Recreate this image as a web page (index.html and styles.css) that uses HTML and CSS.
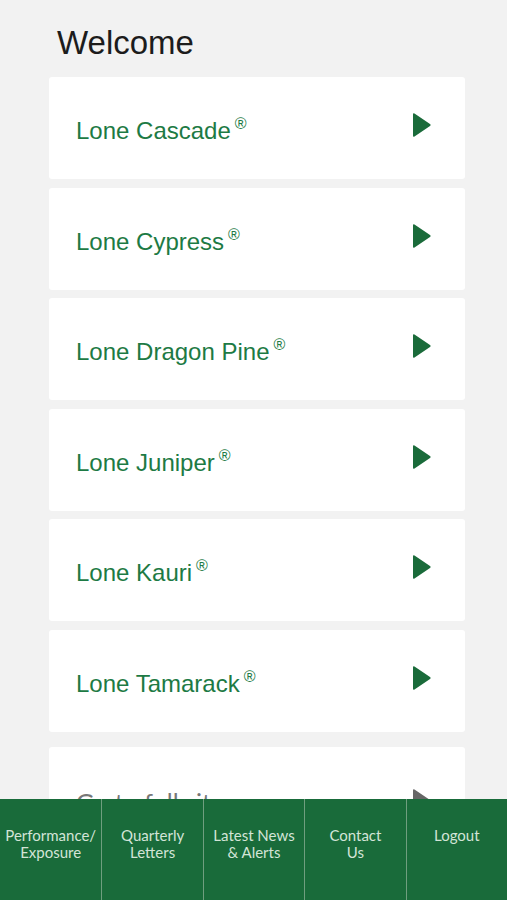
FILE: index.html
```html
<!DOCTYPE html>
<html lang="en">
<head>
  <meta charset="UTF-8" />
  <meta name="viewport" content="width=device-width, initial-scale=1.0" />
  <title>Welcome</title>
  <link rel="stylesheet" href="styles.css">
</head>
<body>
  <div class="page">
    <h1>Welcome</h1>
    <div class="funds">
      <a class="fund" href="#"><span class="name">Lone Cascade<sup>&reg;</sup></span><svg class="arrow" viewBox="0 0 20 26"><path d="M2.5 1.5 L18 12 Q19.5 13 18 14 L2.5 24.5 Q1 25.5 1 23.5 V2.5 Q1 0.5 2.5 1.5 Z"/></svg></a>
      <a class="fund" href="#"><span class="name">Lone Cypress<sup>&reg;</sup></span><svg class="arrow" viewBox="0 0 20 26"><path d="M2.5 1.5 L18 12 Q19.5 13 18 14 L2.5 24.5 Q1 25.5 1 23.5 V2.5 Q1 0.5 2.5 1.5 Z"/></svg></a>
      <a class="fund" href="#"><span class="name">Lone Dragon Pine<sup>&reg;</sup></span><svg class="arrow" viewBox="0 0 20 26"><path d="M2.5 1.5 L18 12 Q19.5 13 18 14 L2.5 24.5 Q1 25.5 1 23.5 V2.5 Q1 0.5 2.5 1.5 Z"/></svg></a>
      <a class="fund" href="#"><span class="name">Lone Juniper<sup>&reg;</sup></span><svg class="arrow" viewBox="0 0 20 26"><path d="M2.5 1.5 L18 12 Q19.5 13 18 14 L2.5 24.5 Q1 25.5 1 23.5 V2.5 Q1 0.5 2.5 1.5 Z"/></svg></a>
      <a class="fund" href="#"><span class="name">Lone Kauri<sup>&reg;</sup></span><svg class="arrow" viewBox="0 0 20 26"><path d="M2.5 1.5 L18 12 Q19.5 13 18 14 L2.5 24.5 Q1 25.5 1 23.5 V2.5 Q1 0.5 2.5 1.5 Z"/></svg></a>
      <a class="fund" href="#"><span class="name">Lone Tamarack<sup>&reg;</sup></span><svg class="arrow" viewBox="0 0 20 26"><path d="M2.5 1.5 L18 12 Q19.5 13 18 14 L2.5 24.5 Q1 25.5 1 23.5 V2.5 Q1 0.5 2.5 1.5 Z"/></svg></a>
    </div>
    <a class="fund full-site" href="#"><span class="name">Go to full site</span><svg class="arrow" viewBox="0 0 20 26"><path d="M2.5 1.5 L18 12 Q19.5 13 18 14 L2.5 24.5 Q1 25.5 1 23.5 V2.5 Q1 0.5 2.5 1.5 Z"/></svg></a>
  </div>

  <nav class="tabbar">
    <a href="#">Performance/<br>Exposure</a>
    <a href="#">Quarterly<br>Letters</a>
    <a href="#">Latest News<br>&amp; Alerts</a>
    <a href="#">Contact<br>Us</a>
    <a href="#">Logout</a>
  </nav>
</body>
</html>
```

FILE: styles.css
```css
body {
  margin: 0;
  background-color: #f2f2f2;
  font-family: "Liberation Sans", Arial, sans-serif;
}
.page {
  margin: 0 42px 0 49px;
  padding-bottom: 120px;
}
h1 {
  margin: 0;
  padding: 24px 0 0 8px;
  height: 77px;
  box-sizing: border-box;
  font-size: 33px;
  line-height: 38px;
  font-weight: normal;
  color: #1c1c1c;
}
.funds {
  display: flex;
  flex-direction: column;
  gap: 8.5px;
}
.fund {
  display: flex;
  justify-content: space-between;
  align-items: flex-start;
  height: 102px;
  box-sizing: border-box;
  padding: 35px 33px 0 27px;
  background-color: #fff;
  border-radius: 3px;
  text-decoration: none;
  color: #1d7a44;
}
.fund .name {
  margin-top: 5px;
  font-size: 24px;
  line-height: 28px;
}
.fund sup {
  font-size: 16px;
  vertical-align: 10px;
  line-height: 0;
  margin-left: 4px;
}
.arrow {
  width: 20px;
  height: 26px;
  fill: #1a6b3a;
}
.full-site {
  margin-top: 15px;
  color: #777;
  padding-top: 41px;
}
.full-site .name {
  margin-top: 0;
  font-family: Lato, sans-serif;
  font-size: 25px;
}
.full-site .arrow {
  fill: #666;
}
.tabbar {
  position: fixed;
  left: 0;
  right: 0;
  bottom: 0;
  height: 101px;
  display: grid;
  grid-template-columns: repeat(5, 1fr);
  background-color: #196b3a;
}
.tabbar a {
  padding-top: 28px;
  text-align: center;
  font-family: Lato, sans-serif;
  font-size: 15px;
  line-height: 17px;
  color: #d3e4d7;
  text-decoration: none;
  border-left: 1px solid #6f9e7f;
}
.tabbar a:first-child {
  border-left: none;
}
```
